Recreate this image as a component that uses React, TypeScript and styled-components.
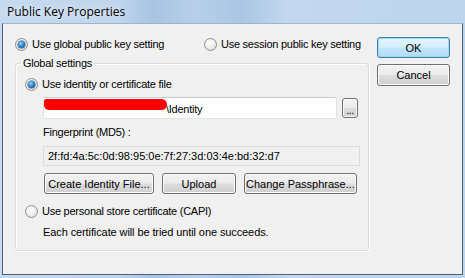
import React, { useState } from "react";
import styled, { createGlobalStyle, css } from "styled-components";

const GlobalStyle = createGlobalStyle`
  html, body {
    margin: 0;
    padding: 0;
    width: 465px;
    height: 278px;
    overflow: hidden;
    background: #b9d1ea;
  }
  * {
    box-sizing: border-box;
  }
`;

const Frame = styled.div`
  width: 465px;
  height: 278px;
  display: flex;
  flex-direction: column;
  padding: 0 2px 3px 2px;
  background: linear-gradient(
    90deg,
    #c6daef 0%,
    #c0d6ed 25%,
    #a9c4e2 33%,
    #b7cfe9 42%,
    #aac6e4 52%,
    #c3d8ee 62%,
    #bdd4ec 100%
  );
`;

const TitleBar = styled.div`
  height: 23px;
  flex: none;
  padding: 3px 0 0 5px;
  font-family: "Open Sans", "Noto Sans", sans-serif;
  font-size: 12px;
  color: #000;
  text-shadow: 0 0 6px rgba(255, 255, 255, 0.9);
`;

const Client = styled.div`
  flex: 1;
  display: flex;
  background: #f0f0f0;
  border: 1px solid #4d6279;
  border-top-color: #9fb5cc;
  padding: 13px 0 0 11px;
  font-family: "Liberation Sans", Arial, sans-serif;
  font-size: 11px;
  letter-spacing: -0.25px;
  color: #000;
`;

const MainColumn = styled.div`
  width: 355px;
  display: flex;
  flex-direction: column;
`;

const SideColumn = styled.div`
  display: flex;
  flex-direction: column;
  gap: 6px;
  margin-left: 8px;
`;

const RadioRow = styled.label<{ $gapTop?: number }>`
  display: flex;
  align-items: center;
  gap: 4px;
  height: 14px;
  margin-top: ${(p) => p.$gapTop ?? 0}px;
  white-space: nowrap;
  cursor: default;
`;

const RadioDot = styled.span<{ $checked: boolean }>`
  position: relative;
  width: 13px;
  height: 13px;
  flex: none;
  border-radius: 50%;
  border: 1px solid #8f8f8f;
  background: radial-gradient(circle at 40% 35%, #ffffff 0%, #f0f0f0 45%, #d2d2d2 100%);
  ${(p) =>
    p.$checked &&
    css`
      &::after {
        content: "";
        position: absolute;
        left: 2px;
        top: 2px;
        width: 7px;
        height: 7px;
        border-radius: 50%;
        background: radial-gradient(circle at 40% 35%, #9fd6fb 0%, #3a8fd8 40%, #0f4b86 85%);
        box-shadow: 0 0 0 0.5px #1f4f80;
      }
    `}
`;

const TopRadios = styled.div`
  display: grid;
  grid-template-columns: 189px auto;
  margin-left: 1px;
`;

const GroupBox = styled.fieldset`
  margin: 6px 0 0 1px;
  padding: 8px 8px 0 9px;
  height: 194px;
  border: 1px solid #d5dfe5;
  border-radius: 3px;
  box-shadow: inset 1px 1px 0 #fff, 1px 1px 0 #fff;
  display: flex;
  flex-direction: column;
`;

const Legend = styled.legend`
  padding: 0 2px;
  margin-left: -4px;
  font-size: 11px;
`;

const FileRow = styled.div`
  display: flex;
  align-items: center;
  gap: 5px;
  margin: 6px 0 0 18px;
`;

const TextInput = styled.div`
  position: relative;
  width: 294px;
  height: 22px;
  background: #fff;
  border: 1px solid #dfe3e8;
  border-top-color: #c7ccd3;
  border-radius: 2px;
  padding: 5px 0 0 122px;
  white-space: nowrap;
`;

const Redaction = styled.span`
  position: absolute;
  left: 0;
  top: 1px;
  width: 123px;
  height: 11px;
  background: #ff0000;
  border-radius: 3px 7px 7px 6px;
`;

const Caption = styled.div`
  margin: 7px 0 0 18px;
  height: 14px;
`;

const ReadOnlyBox = styled.div`
  width: 317px;
  height: 20px;
  margin: 6px 0 0 18px;
  padding: 3px 0 0 4px;
  border: 1px solid #dcdcdc;
  background: #f0f0f0;
  border-radius: 1px;
  letter-spacing: 0;
`;

const ButtonRow = styled.div`
  display: flex;
  gap: 8px;
  margin: 7px 0 0 19px;
`;

const WinButton = styled.button<{ $width: number; $height?: number; $default?: boolean }>`
  width: ${(p) => p.$width}px;
  height: ${(p) => p.$height ?? 21}px;
  padding: 0;
  font-family: "Liberation Sans", Arial, sans-serif;
  font-size: 11px;
  color: #000;
  border: 1px solid #707070;
  border-radius: 3px;
  background: linear-gradient(#f2f2f2 0%, #ebebeb 48%, #dddddd 52%, #cfcfcf 100%);
  box-shadow: inset 0 0 0 1px #fbfbfb;
  cursor: default;
  ${(p) =>
    p.$default &&
    css`
      border-color: #3c7fb1;
      background: linear-gradient(#e5f4fc 0%, #d4eefb 48%, #c0e6fb 52%, #aedcf5 100%);
      box-shadow: inset 0 0 0 1px #9fd6f3;
    `}
`;

const Browse = styled(WinButton)`
  font-size: 10px;
  line-height: 10px;
  letter-spacing: -0.5px;
  padding-top: 5px;
  box-shadow: inset 0 0 0 1px #f8f8f8;
`;

const Note = styled.div`
  margin: 8px 0 0 18px;
  letter-spacing: -0.1px;
`;

const App: React.FC = () => {
  const [scope, setScope] = useState<"global" | "session">("global");
  const [source, setSource] = useState<"file" | "capi">("file");

  return (
    <>
      <GlobalStyle />
      <Frame>
        <TitleBar>Public Key Properties</TitleBar>
        <Client>
          <MainColumn>
            <TopRadios>
              <RadioRow onClick={() => setScope("global")}>
                <RadioDot $checked={scope === "global"} />
                Use global public key setting
              </RadioRow>
              <RadioRow onClick={() => setScope("session")}>
                <RadioDot $checked={scope === "session"} />
                Use session public key setting
              </RadioRow>
            </TopRadios>

            <GroupBox>
              <Legend>Global settings</Legend>
              <RadioRow onClick={() => setSource("file")}>
                <RadioDot $checked={source === "file"} />
                Use identity or certificate file
              </RadioRow>
              <FileRow>
                <TextInput>
                  <Redaction />
                  \Identity
                </TextInput>
                <Browse $width={16} $height={20}>...</Browse>
              </FileRow>
              <Caption>Fingerprint (MD5) :</Caption>
              <ReadOnlyBox>2f:fd:4a:5c:0d:98:95:0e:7f:27:3d:03:4e:bd:32:d7</ReadOnlyBox>
              <ButtonRow>
                <WinButton $width={110}>Create Identity File...</WinButton>
                <WinButton $width={74}>Upload</WinButton>
                <WinButton $width={113}>Change Passphrase...</WinButton>
              </ButtonRow>
              <RadioRow $gapTop={10} onClick={() => setSource("capi")}>
                <RadioDot $checked={source === "capi"} />
                Use personal store certificate (CAPI)
              </RadioRow>
              <Note>Each certificate will be tried until one succeeds.</Note>
            </GroupBox>
          </MainColumn>

          <SideColumn>
            <WinButton $width={73} $height={21} $default>
              OK
            </WinButton>
            <WinButton $width={73} $height={22}>
              Cancel
            </WinButton>
          </SideColumn>
        </Client>
      </Frame>
    </>
  );
};

export default App;
